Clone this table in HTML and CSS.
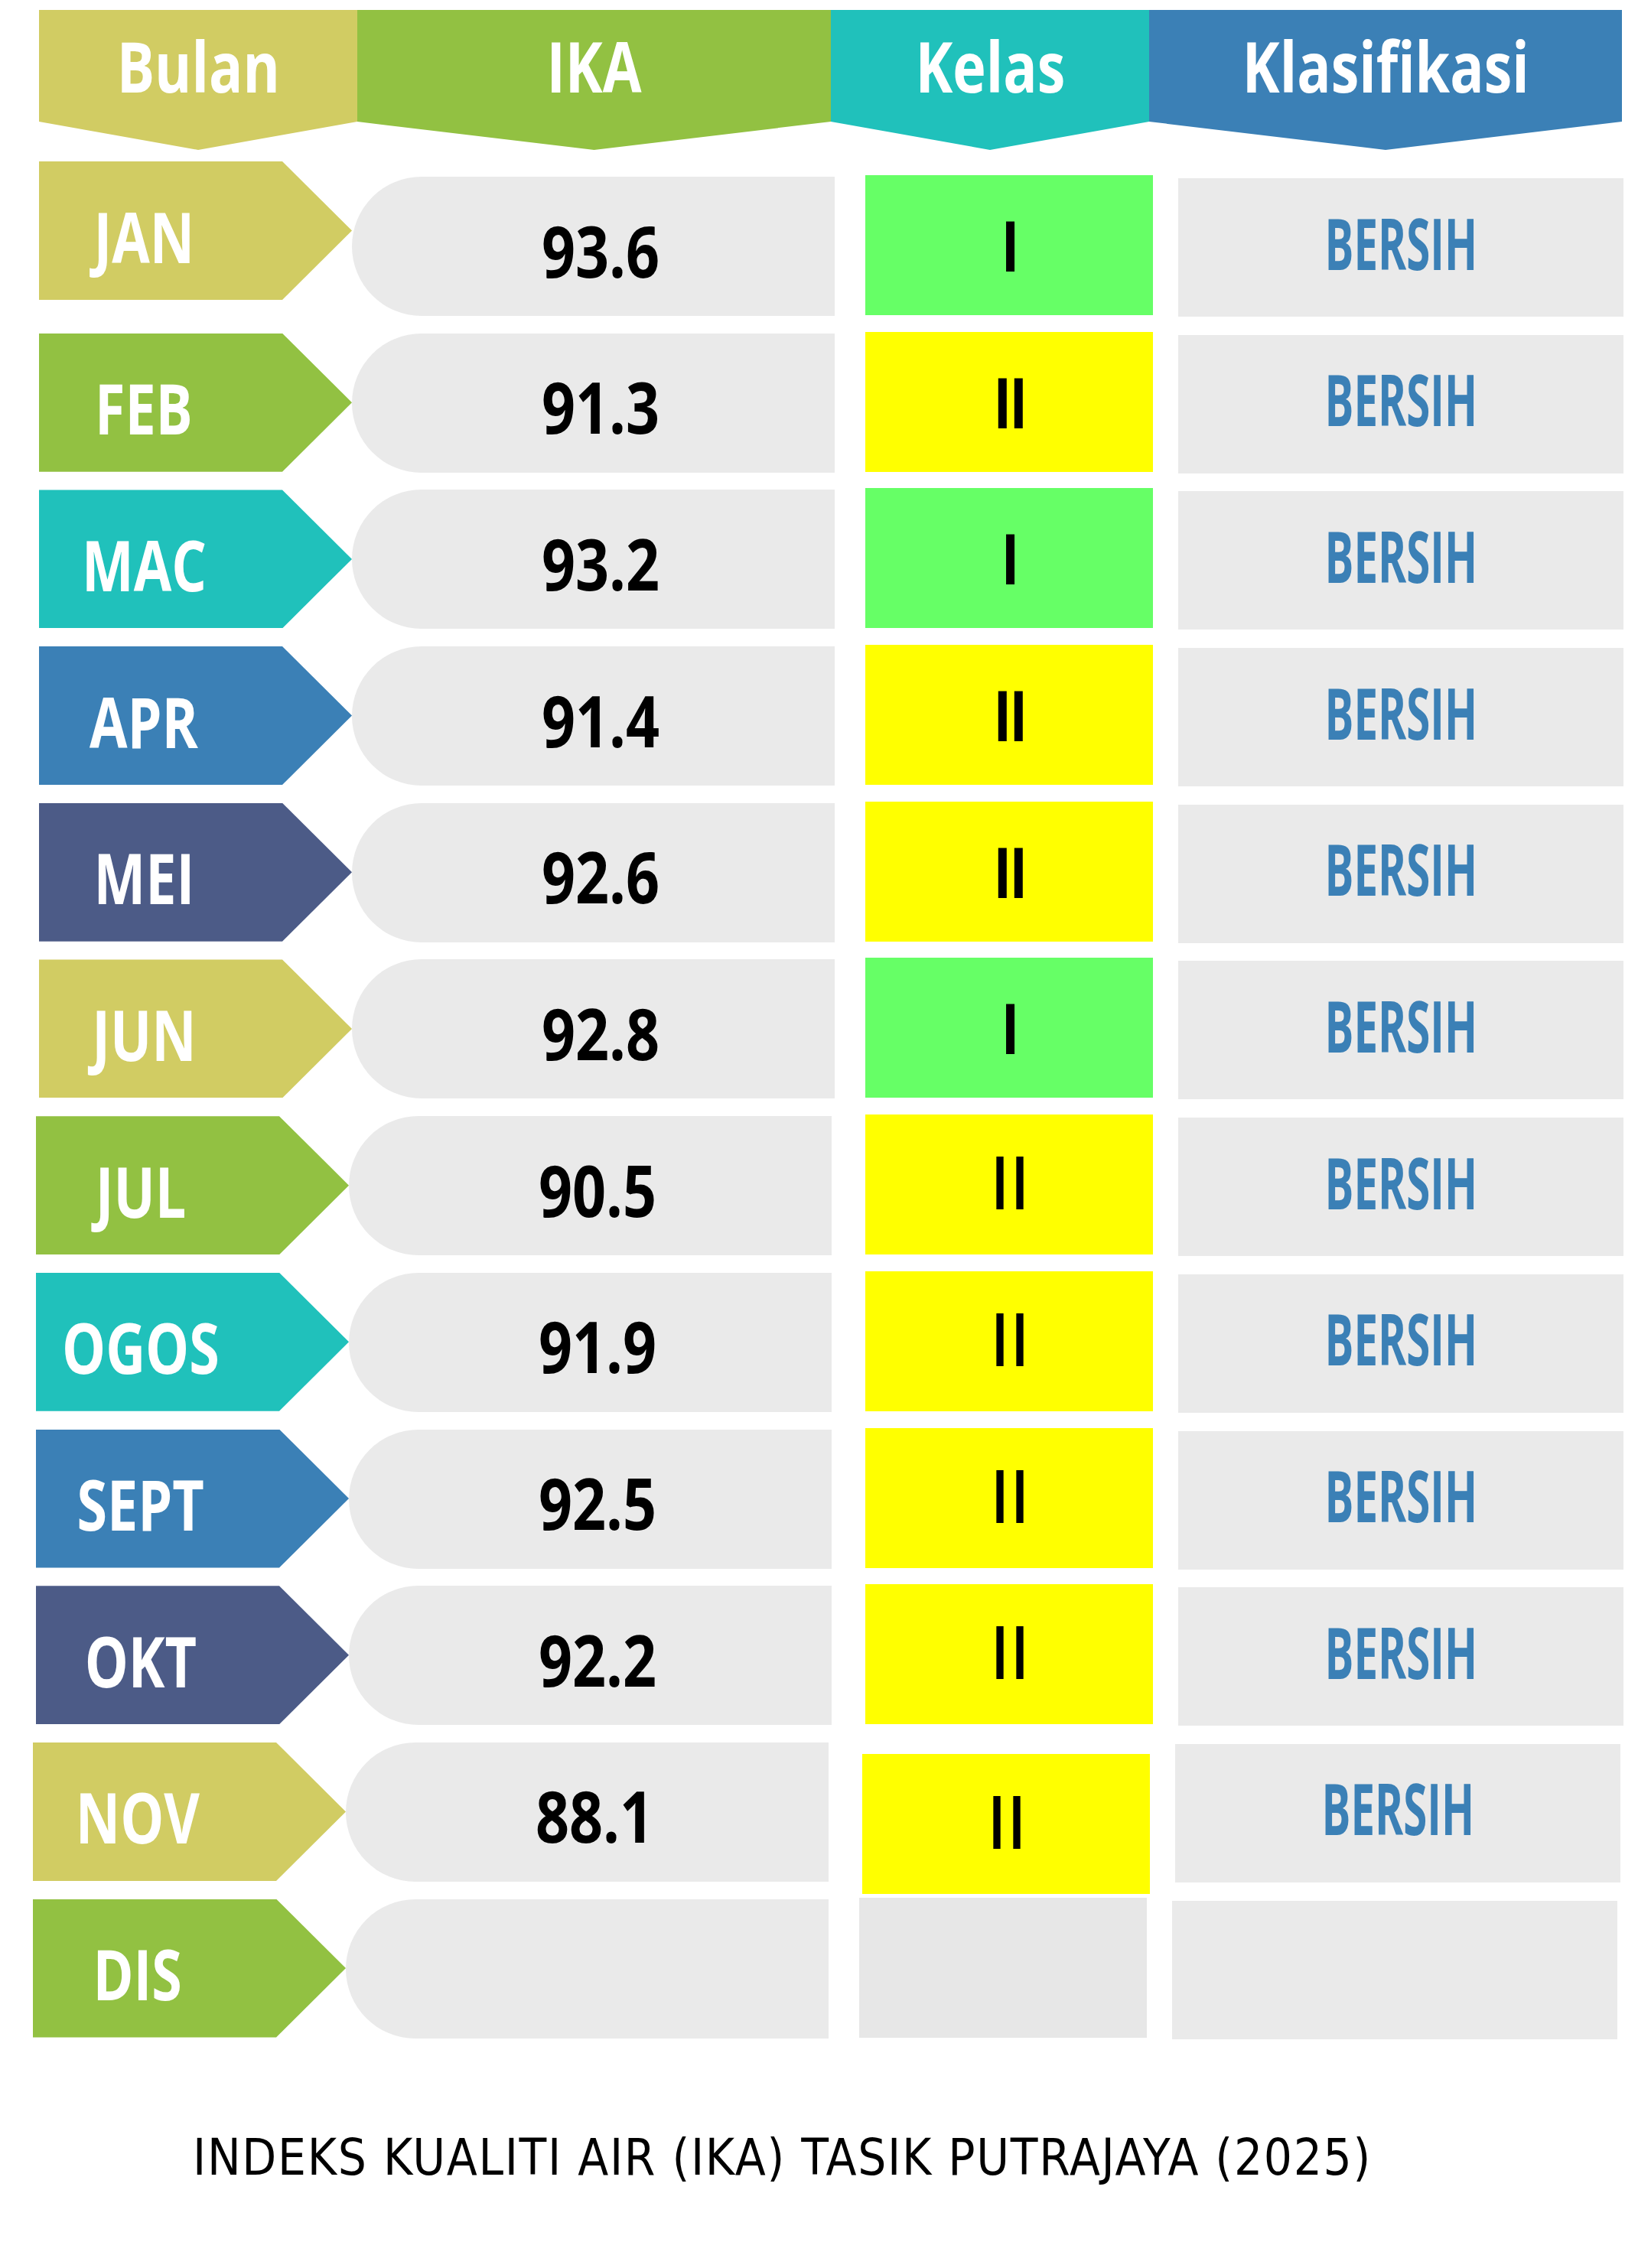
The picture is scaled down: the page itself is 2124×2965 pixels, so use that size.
FILE: index.html
```html
<!DOCTYPE html>
<html lang="ms">
<head>
<meta charset="utf-8">
<title>Indeks Kualiti Air (IKA) Tasik Putrajaya (2025)</title>
<link rel="stylesheet" href="styles.css">
</head>
<body>
<div class="sheet">
  <div class="head">
    <div class="hcell c-olive"><span class="htext">Bulan</span></div>
    <div class="hcell c-green"><span class="htext">IKA</span></div>
    <div class="hcell c-teal"><span class="htext">Kelas</span></div>
    <div class="hcell c-blue"><span class="htext">Klasifikasi</span></div>
  </div>

  <div class="rows">
    <div class="row">
      <div class="month c-olive month--raised"><span class="mtext">JAN</span></div>
      <div class="ika"><span class="ntext">93.6</span></div>
      <div class="kelas kelas--one"><span class="ktext">I</span></div>
      <div class="klas"><span class="btext">BERSIH</span></div>
    </div>
    <div class="row">
      <div class="month c-green"><span class="mtext">FEB</span></div>
      <div class="ika"><span class="ntext">91.3</span></div>
      <div class="kelas kelas--two"><span class="ktext">II</span></div>
      <div class="klas"><span class="btext">BERSIH</span></div>
    </div>
    <div class="row">
      <div class="month c-teal"><span class="mtext">MAC</span></div>
      <div class="ika"><span class="ntext">93.2</span></div>
      <div class="kelas kelas--one"><span class="ktext">I</span></div>
      <div class="klas"><span class="btext">BERSIH</span></div>
    </div>
    <div class="row">
      <div class="month c-blue"><span class="mtext">APR</span></div>
      <div class="ika"><span class="ntext">91.4</span></div>
      <div class="kelas kelas--two"><span class="ktext">II</span></div>
      <div class="klas"><span class="btext">BERSIH</span></div>
    </div>
    <div class="row">
      <div class="month c-navy"><span class="mtext">MEI</span></div>
      <div class="ika"><span class="ntext">92.6</span></div>
      <div class="kelas kelas--two"><span class="ktext">II</span></div>
      <div class="klas"><span class="btext">BERSIH</span></div>
    </div>
    <div class="row">
      <div class="month c-olive"><span class="mtext">JUN</span></div>
      <div class="ika"><span class="ntext">92.8</span></div>
      <div class="kelas kelas--one"><span class="ktext">I</span></div>
      <div class="klas"><span class="btext">BERSIH</span></div>
    </div>
    <div class="row row--shift">
      <div class="month c-green"><span class="mtext">JUL</span></div>
      <div class="ika"><span class="ntext">90.5</span></div>
      <div class="kelas kelas--two kelas--thin"><span class="ktext">II</span></div>
      <div class="klas"><span class="btext">BERSIH</span></div>
    </div>
    <div class="row row--shift">
      <div class="month c-teal"><span class="mtext">OGOS</span></div>
      <div class="ika"><span class="ntext">91.9</span></div>
      <div class="kelas kelas--two kelas--thin"><span class="ktext">II</span></div>
      <div class="klas"><span class="btext">BERSIH</span></div>
    </div>
    <div class="row row--shift">
      <div class="month c-blue"><span class="mtext">SEPT</span></div>
      <div class="ika"><span class="ntext">92.5</span></div>
      <div class="kelas kelas--two kelas--thin"><span class="ktext">II</span></div>
      <div class="klas"><span class="btext">BERSIH</span></div>
    </div>
    <div class="row row--shift">
      <div class="month c-navy"><span class="mtext">OKT</span></div>
      <div class="ika"><span class="ntext">92.2</span></div>
      <div class="kelas kelas--two kelas--thin"><span class="ktext">II</span></div>
      <div class="klas"><span class="btext">BERSIH</span></div>
    </div>
    <div class="row row--shift2">
      <div class="month c-olive"><span class="mtext">NOV</span></div>
      <div class="ika"><span class="ntext">88.1</span></div>
      <div class="kelas kelas--two kelas--thin kelas--low"><span class="ktext">II</span></div>
      <div class="klas"><span class="btext">BERSIH</span></div>
    </div>
    <div class="row row--shift2">
      <div class="month c-green"><span class="mtext">DIS</span></div>
      <div class="ika"></div>
      <div class="kelas kelas--empty"></div>
      <div class="klas"></div>
    </div>
  </div>

  <p class="caption">INDEKS KUALITI AIR (IKA) TASIK PUTRAJAYA (2025)</p>
</div>
</body>
</html>
```
FILE: styles.css
```css
html, body {
  margin: 0;
  padding: 0;
  background: #ffffff;
}

body {
  font-family: "Open Sans", "Noto Sans", "Liberation Sans", sans-serif;
}

.sheet {
  width: 2124px;
  min-height: 2965px;
  padding-top: 13px;
  box-sizing: border-box;
}

/* colours */
.c-olive { background: #d1cc63; }
.c-green { background: #92c142; }
.c-teal  { background: #20c1bb; }
.c-blue  { background: #3b80b6; }
.c-navy  { background: #4c5b87; }

/* header */
.head {
  display: grid;
  grid-template-columns: 416px 619px 416px 618px;
  margin-left: 51px;
  height: 183px;
}

.hcell {
  height: 183px;
  clip-path: polygon(0 0, 100% 0, 100% 146px, 50% 183px, 0 146px);
  display: flex;
  justify-content: center;
  align-items: flex-start;
}

.htext {
  display: inline-block;
  height: 146px;
  line-height: 146px;
  font-size: 92px;
  font-weight: 700;
  color: #ffffff;
  transform: scaleX(0.8);
}

/* rows */
.rows {
  margin-top: 35px;
  padding-left: 51px;
  display: flex;
  flex-direction: column;
  gap: 22.7px;
}

.row {
  display: flex;
  height: 182px;
}

.row--shift { margin-left: -4px; }
.row--shift2 { margin-left: -8px; }

.month {
  width: 409px;
  height: 181px;
  flex: none;
  clip-path: polygon(0 0, 318px 0, 100% 50%, 318px 100%, 0 100%);
  display: flex;
  align-items: center;
  justify-content: center;
  padding-right: 135px;
  padding-top: 14px;
  box-sizing: border-box;
}

.month--raised {
  margin-top: -20px;
}

.mtext {
  display: inline-block;
  font-size: 92px;
  line-height: 1;
  font-weight: 700;
  color: #ffffff;
  transform: scaleX(0.78);
}

.ika {
  width: 631px;
  height: 182px;
  flex: none;
  background: #eaeaea;
  border-radius: 91px 0 0 91px;
  display: flex;
  align-items: center;
  justify-content: center;
  padding-left: 20px;
  padding-top: 9px;
  box-sizing: border-box;
}

.ntext {
  display: inline-block;
  font-size: 94px;
  line-height: 1;
  font-weight: 700;
  color: #000000;
  transform: scaleX(0.82);
}

.kelas {
  width: 376px;
  height: 183px;
  margin-left: 40px;
  margin-top: -2px;
  flex: none;
  display: flex;
  align-items: center;
  justify-content: center;
}

.row--shift .kelas,
.row--shift2 .kelas { margin-left: 44px; }

.kelas--one { background: #66ff66; }
.kelas--two { background: #ffff00; }
.kelas--empty { background: #e7e7e7; }
.row--shift2 .kelas--empty { margin-left: 40px; }
.kelas--low { margin-top: 15px; }

.ktext {
  display: inline-block;
  font-size: 91px;
  line-height: 1;
  font-weight: 700;
  color: #000000;
  letter-spacing: -4px;
  transform: scaleX(0.8);
}

.kelas--thin .ktext {
  font-family: "DejaVu Sans", sans-serif;
  font-weight: 400;
  font-size: 95px;
  letter-spacing: -2px;
  transform: none;
}

.klas {
  width: 582px;
  height: 181px;
  margin-left: 33px;
  margin-top: 2px;
  flex: none;
  background: #eaeaea;
  display: flex;
  align-items: center;
  justify-content: center;
  padding-bottom: 14px;
  box-sizing: border-box;
}

.btext {
  display: inline-block;
  font-size: 94px;
  line-height: 1;
  font-weight: 700;
  color: #3b80b6;
  transform: scaleX(0.6);
}

/* caption */
.caption {
  margin: 123px 0 0 0;
  padding-left: 252px;
  font-family: "DejaVu Sans", "Verdana", sans-serif;
  font-stretch: condensed;
  font-size: 65px;
  line-height: 1;
  letter-spacing: 1.7px;
  color: #000000;
  white-space: nowrap;
}
```
